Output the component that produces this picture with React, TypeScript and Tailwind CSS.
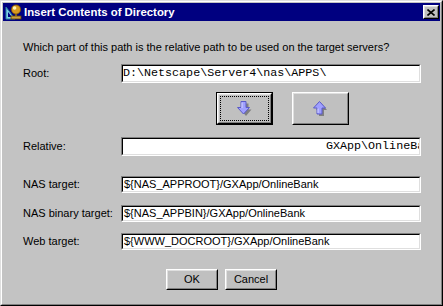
import React from "react";

const sans = { fontFamily: '"Liberation Sans", Arial, sans-serif' } as const;
const mono = { fontFamily: '"Liberation Mono", "Courier New", monospace' } as const;

function Field({ h, children, className = "" }: { h: string; children?: React.ReactNode; className?: string }) {
  return (
    <div className={`w-[300px] ${h} border-t border-l border-[#808080] border-r border-b border-r-white border-b-white`}>
      <div className="h-full border-t border-l border-black border-r border-b border-r-[#dfdfdf] border-b-[#dfdfdf] bg-white overflow-hidden">
        <div className={`h-full flex items-center whitespace-nowrap ${className}`}>{children}</div>
      </div>
    </div>
  );
}

function Raised({ children, className = "" }: { children?: React.ReactNode; className?: string }) {
  return (
    <div className={`border-t border-l border-white border-r border-b border-r-black border-b-black ${className}`}>
      <div className="h-full w-full border-t border-l border-[#dfdfdf] border-r border-b border-r-[#808080] border-b-[#808080] bg-[#c0c0c0] flex items-center justify-center">
        {children}
      </div>
    </div>
  );
}

function DownArrow() {
  return (
    <svg width="15" height="16" viewBox="0 0 15 16">
      <polygon points="5,1 10,1 10,7 13,7 7.5,13.5 2,7 5,7" fill="#808080" transform="translate(1.5,1.5)" />
      <polygon points="4,0.5 9,0.5 9,6.5 12.5,6.5 6.5,13 0.5,6.5 4,6.5" fill="#a0a0ff" stroke="#5a5ac8" strokeWidth="1" />
      <line x1="5" y1="1.5" x2="5" y2="7" stroke="#d8d8ff" strokeWidth="1" />
    </svg>
  );
}

function UpArrow() {
  return (
    <svg width="15" height="16" viewBox="0 0 15 16">
      <polygon points="7.5,1.5 13,8 10,8 10,14 5,14 5,8 2,8" fill="#808080" transform="translate(1,1)" />
      <polygon points="6.5,0.5 12.5,7 9,7 9,13 4,13 4,7 0.5,7" fill="#a0a0ff" stroke="#5a5ac8" strokeWidth="1" />
      <line x1="5" y1="7.5" x2="5" y2="12" stroke="#d8d8ff" strokeWidth="1" />
    </svg>
  );
}

function TitleIcon() {
  return (
    <svg width="17" height="16" viewBox="0 0 17 16">
      <polygon points="1,3 1,15 10,15" fill="#7fd0e8" stroke="#2a7fa0" strokeWidth="1" />
      <polygon points="3,8 3,13 7,13" fill="#000080" />
      <rect x="6" y="12" width="10" height="3" fill="#c8a040" stroke="#604000" strokeWidth="0.8" />
      <rect x="10" y="9" width="2" height="3" fill="#806020" />
      <circle cx="11" cy="5.5" r="4.6" fill="#d89a20" stroke="#7a5000" strokeWidth="0.8" />
      <circle cx="9.6" cy="4" r="1.8" fill="#fff2b0" />
    </svg>
  );
}

function Row({ label, mt, children }: { label: string; mt: string; children: React.ReactNode }) {
  return (
    <div className={`flex items-center ${mt}`}>
      <div className="w-[98px] text-[11px] leading-[13px] text-black">{label}</div>
      {children}
    </div>
  );
}

export default function App() {
  return (
    <div className="w-[443px] h-[306px] bg-[#c0c0c0]" style={sans}>
      <div className="w-full h-full border-t border-l border-[#dfdfdf] border-r border-b border-r-black border-b-black">
        <div className="w-full h-full border-t border-l border-white border-r border-b border-r-[#808080] border-b-[#808080] p-px flex flex-col bg-[#c3c3c3]">
          {/* Title bar */}
          <div className="h-[18px] bg-[#000080] flex items-center pl-[2px] pr-[1px]">
            <TitleIcon />
            <div className="ml-[2px] text-white font-bold text-[11.4px] leading-[14px]">Insert Contents of Directory</div>
            <div className="flex-1" />
            <Raised className="w-[16px] h-[14px]">
              <svg width="8" height="7" viewBox="0 0 8 7">
                <path d="M0.5 0.5 L7.5 6.5 M7.5 0.5 L0.5 6.5" stroke="#000" strokeWidth="1.6" />
              </svg>
            </Raised>
          </div>

          {/* Body */}
          <div className="flex flex-col pl-[20px] text-black">
            <div className="mt-[20px] text-[11px] leading-[13px]">
              Which part of this path is the relative path to be used on the target servers?
            </div>

            <Row label="Root:" mt="mt-[10px]">
              <Field h="h-[19px]">
                <span className="text-[11.7px] leading-[15px] text-black" style={mono}>D:\Netscape\Server4\nas\APPS\</span>
              </Field>
            </Row>

            <div className="flex mt-[9px] ml-[193px] gap-[19px]">
              <div className="w-[57px] h-[33px] border border-black">
                <Raised className="w-full h-full">
                  <div className="w-[49px] h-[25px] border border-dotted border-black flex items-center justify-center">
                    <DownArrow />
                  </div>
                </Raised>
              </div>
              <Raised className="w-[57px] h-[33px]">
                <UpArrow />
              </Raised>
            </div>

            <Row label="Relative:" mt="mt-[12px]">
              <Field h="h-[19px]" className="pl-[203px]">
                <span className="text-[11.7px] leading-[15px]" style={mono}>GXApp\OnlineBank</span>
              </Field>
            </Row>

            <Row label="NAS target:" mt="mt-[20px]">
              <Field h="h-[17px]" className="pl-px">
                <span className="text-[11px] leading-[13px]">{"${NAS_APPROOT}/GXApp/OnlineBank"}</span>
              </Field>
            </Row>

            <Row label="NAS binary target:" mt="mt-[12px]">
              <Field h="h-[17px]" className="pl-px">
                <span className="text-[11px] leading-[13px]">{"${NAS_APPBIN}/GXApp/OnlineBank"}</span>
              </Field>
            </Row>

            <Row label="Web target:" mt="mt-[11px]">
              <Field h="h-[17px]" className="pl-px">
                <span className="text-[11px] leading-[13px]">{"${WWW_DOCROOT}/GXApp/OnlineBank"}</span>
              </Field>
            </Row>
          </div>

          <div className="flex justify-center gap-[7px] mt-[19px]">
            <Raised className="w-[52px] h-[21px]">
              <span className="text-[11px] leading-[13px]">OK</span>
            </Raised>
            <Raised className="w-[52px] h-[21px]">
              <span className="text-[11px] leading-[13px]">Cancel</span>
            </Raised>
          </div>
        </div>
      </div>
    </div>
  );
}
